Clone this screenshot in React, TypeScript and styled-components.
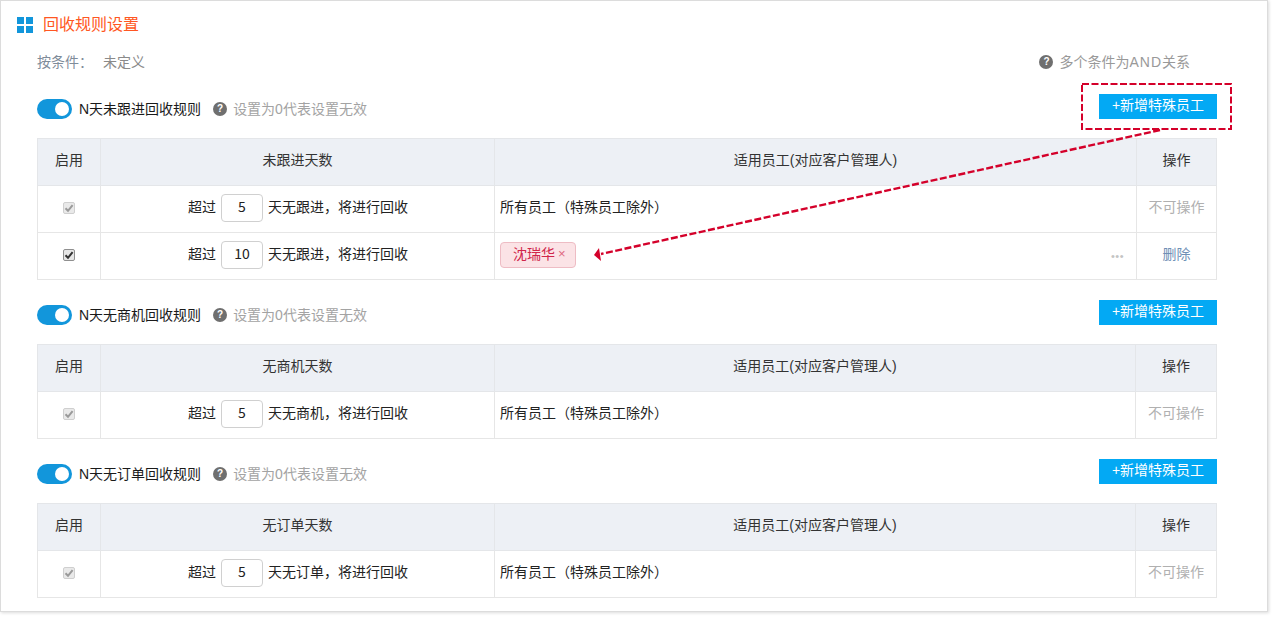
import React from 'react';
import styled, { createGlobalStyle } from 'styled-components';

const GlobalStyle = createGlobalStyle`
  html, body {
    margin: 0;
    padding: 0;
    background: #ffffff;
    font-family: "Liberation Sans", "Noto Sans CJK SC", sans-serif;
    font-size: 14px;
    color: #333333;
  }
`;

const Page = styled.div`
  position: relative;
  width: 1277px;
  height: 620px;
  overflow: hidden;
`;

const Card = styled.div`
  box-sizing: border-box;
  width: 1268px;
  height: 612px;
  background: #ffffff;
  border: 1px solid #dcdcdc;
  box-shadow: 1px 1px 3px rgba(0, 0, 0, 0.14);
  padding: 14px 50px 0 36px;
`;

const TitleRow = styled.div`
  display: flex;
  align-items: center;
  gap: 10px;
  height: 20px;
  margin-left: -20px;
`;

const TitleText = styled.div`
  font-size: 16px;
  line-height: 20px;
  color: #ff5722;
`;

const ConditionRow = styled.div`
  display: flex;
  align-items: center;
  height: 20px;
  margin-top: 17px;
  font-size: 14px;
  line-height: 18px;
  color: #7f8c9a;
`;

const ConditionValue = styled.span`
  margin-left: 10px;
  color: #8a8a8a;
`;

const ConditionNote = styled.div`
  display: flex;
  align-items: center;
  gap: 6px;
  margin-left: auto;
  margin-right: 27px;
  color: #999999;
`;

const WideLatin = styled.span`
  letter-spacing: 1px;
`;

const RuleHeader = styled.div<{ $first?: boolean }>`
  display: flex;
  align-items: flex-end;
  height: 25px;
  margin-top: ${(p) => (p.$first ? '22px' : '20px')};
  margin-bottom: 19px;
`;

const SwitchTrack = styled.div`
  position: relative;
  width: 35px;
  height: 20px;
  border-radius: 10px;
  background: #1296db;
`;

const SwitchKnob = styled.div`
  position: absolute;
  top: 3px;
  right: 3px;
  width: 14px;
  height: 14px;
  border-radius: 50%;
  background: #ffffff;
`;

const RuleName = styled.span`
  margin-left: 7px;
  font-size: 14px;
  line-height: 18px;
  color: #1a1a1a;
`;

const HelpBadge = styled.span<{ $gapLeft?: number }>`
  display: inline-flex;
  align-items: center;
  justify-content: center;
  flex-shrink: 0;
  width: 14px;
  height: 14px;
  margin-left: ${(p) => p.$gapLeft ?? 0}px;
  border-radius: 50%;
  background: #6f6f6f;
  color: #ffffff;
  font-family: "Liberation Sans", sans-serif;
  font-size: 10px;
  font-weight: 700;
  line-height: 14px;
`;

const HelpRow = styled.div`
  display: flex;
  align-items: center;
  height: 20px;
`;

const HelpText = styled.span`
  margin-left: 6px;
  font-size: 14px;
  line-height: 18px;
  color: #a3a3a3;
`;

const AddButton = styled.button`
  margin-left: auto;
  width: 118px;
  height: 25px;
  padding: 0 0 3px;
  border: none;
  background: #03a9f4;
  color: #ffffff;
  font-family: inherit;
  font-size: 14px;
  line-height: 20px;
`;

const RuleTable = styled.table`
  width: 1180px;
  border-collapse: collapse;
  table-layout: fixed;
`;

const HeadCell = styled.th`
  height: 42px;
  padding: 0 0 4px;
  border: 1px solid #e4e6e9;
  background: #edf0f5;
  font-size: 14px;
  line-height: 20px;
  font-weight: 400;
  color: #333333;
  text-align: center;
`;

const BodyCell = styled.td<{ $align?: string; $pad?: number }>`
  position: relative;
  height: 44px;
  padding: 0 ${(p) => p.$pad ?? 0}px 2px;
  border: 1px solid #e6e6e6;
  font-size: 14px;
  line-height: 20px;
  color: #222222;
  text-align: ${(p) => p.$align ?? 'center'};
`;

const Check = styled.span<{ $disabled?: boolean }>`
  display: inline-flex;
  align-items: center;
  justify-content: center;
  box-sizing: border-box;
  width: 12px;
  height: 12px;
  margin-bottom: 2px;
  border: 1px solid ${(p) => (p.$disabled ? '#cfcfcf' : '#8f8f8f')};
  border-radius: 2px;
  background: ${(p) => (p.$disabled ? '#e9e9e9' : '#e6e6e6')};
  color: ${(p) => (p.$disabled ? '#9a9a9a' : '#333333')};
  vertical-align: middle;
`;

const DaysRow = styled.div`
  display: flex;
  align-items: center;
  justify-content: center;
  gap: 5px;
  padding-left: 1px;
`;

const DaysLabel = styled.span`
  margin-bottom: 2px;
`;

const DaysInput = styled.span`
  box-sizing: border-box;
  width: 42px;
  height: 28px;
  border: 1px solid #d0d0d0;
  border-radius: 4px;
  font-family: "Noto Sans CJK SC", sans-serif;
  font-size: 14px;
  line-height: 22px;
  text-align: center;
`;

const PlainEmployees = styled.span`
  display: block;
  margin-bottom: 2px;
`;

const EmployeeTag = styled.span`
  display: inline-flex;
  align-items: center;
  box-sizing: border-box;
  width: 76px;
  height: 26px;
  padding: 0 0 3px 12px;
  border: 1px solid #eebcc4;
  border-radius: 4px;
  background: #fbe3e6;
  color: #d0254a;
  font-size: 14px;
  vertical-align: middle;
`;

const TagClose = styled.span`
  margin-left: 3px;
  font-family: "Liberation Sans", sans-serif;
  font-size: 13px;
  color: #e0687f;
`;

const MoreDots = styled.span`
  position: absolute;
  top: 50%;
  right: 12px;
  margin-top: -8px;
  font-family: "Liberation Sans", sans-serif;
  font-size: 11px;
  letter-spacing: 0.5px;
  line-height: 16px;
  color: #c4c4c4;
`;

const ActionText = styled.span<{ $danger?: boolean }>`
  display: block;
  margin-bottom: 2px;
  font-size: 14px;
  color: ${(p) => (p.$danger ? '#6f8fb5' : '#b0b0b0')};
`;

const ColWidth = styled.col<{ $w: number }>`
  width: ${(p) => p.$w}px;
`;

const Annotation = styled.svg`
  position: absolute;
  top: 0;
  left: 0;
  pointer-events: none;
`;

const GridIcon = () => (
  <svg width="16" height="16" viewBox="0 0 16 16">
    <rect x="0" y="0" width="7" height="7" fill="#1296db" />
    <rect x="9" y="0" width="7" height="7" fill="#1296db" />
    <rect x="0" y="9" width="7" height="7" fill="#1296db" />
    <rect x="9" y="9" width="7" height="7" fill="#1296db" />
  </svg>
);

const CheckMark = () => (
  <svg width="10" height="10" viewBox="0 0 10 10">
    <path d="M1.5 5.2 L4 7.8 L8.6 2.2" fill="none" stroke="currentColor" strokeWidth="2" />
  </svg>
);

type Row = {
  days: string;
  disabled: boolean;
  tag?: string;
};

type Rule = {
  name: string;
  column: string;
  suffix: string;
  lastCol: number;
  rows: Row[];
};

const rules: Rule[] = [
  {
    name: 'N天未跟进回收规则',
    column: '未跟进天数',
    suffix: '天无跟进，将进行回收',
    lastCol: 80,
    rows: [
      { days: '5', disabled: true },
      { days: '10', disabled: false, tag: '沈瑞华' },
    ],
  },
  {
    name: 'N天无商机回收规则',
    column: '无商机天数',
    suffix: '天无商机，将进行回收',
    lastCol: 81,
    rows: [{ days: '5', disabled: true }],
  },
  {
    name: 'N天无订单回收规则',
    column: '无订单天数',
    suffix: '天无订单，将进行回收',
    lastCol: 81,
    rows: [{ days: '5', disabled: true }],
  },
];

const App: React.FC = () => {
  return (
    <>
      <GlobalStyle />
      <Page>
        <Card>
          <TitleRow>
            <GridIcon />
            <TitleText>回收规则设置</TitleText>
          </TitleRow>
          <ConditionRow>
            按条件：
            <ConditionValue>未定义</ConditionValue>
            <ConditionNote>
              <HelpBadge>?</HelpBadge>
              <span>
                多个条件为<WideLatin>AND</WideLatin>关系
              </span>
            </ConditionNote>
          </ConditionRow>

          {rules.map((rule, index) => (
            <React.Fragment key={rule.name}>
              <RuleHeader $first={index === 0}>
                <HelpRow>
                  <SwitchTrack>
                    <SwitchKnob />
                  </SwitchTrack>
                  <RuleName>{rule.name}</RuleName>
                  <HelpBadge $gapLeft={12}>?</HelpBadge>
                  <HelpText>设置为0代表设置无效</HelpText>
                </HelpRow>
                <AddButton>+新增特殊员工</AddButton>
              </RuleHeader>
              <RuleTable>
                <colgroup>
                  <ColWidth $w={63} />
                  <ColWidth $w={394} />
                  <ColWidth $w={1179 - 63 - 394 - rule.lastCol} />
                  <ColWidth $w={rule.lastCol} />
                </colgroup>
                <thead>
                  <tr>
                    <HeadCell>启用</HeadCell>
                    <HeadCell>{rule.column}</HeadCell>
                    <HeadCell>适用员工(对应客户管理人)</HeadCell>
                    <HeadCell>操作</HeadCell>
                  </tr>
                </thead>
                <tbody>
                  {rule.rows.map((row) => (
                    <tr key={row.days}>
                      <BodyCell>
                        <Check $disabled={row.disabled}>
                          <CheckMark />
                        </Check>
                      </BodyCell>
                      <BodyCell>
                        <DaysRow>
                          <DaysLabel>超过</DaysLabel>
                          <DaysInput>{row.days}</DaysInput>
                          <DaysLabel>{rule.suffix}</DaysLabel>
                        </DaysRow>
                      </BodyCell>
                      <BodyCell $align="left" $pad={5}>
                        {row.tag ? (
                          <>
                            <EmployeeTag>
                              {row.tag}
                              <TagClose>×</TagClose>
                            </EmployeeTag>
                            <MoreDots>•••</MoreDots>
                          </>
                        ) : (
                          <PlainEmployees>所有员工（特殊员工除外）</PlainEmployees>
                        )}
                      </BodyCell>
                      <BodyCell>
                        <ActionText $danger={!row.disabled}>
                          {row.disabled ? '不可操作' : '删除'}
                        </ActionText>
                      </BodyCell>
                    </tr>
                  ))}
                </tbody>
              </RuleTable>
            </React.Fragment>
          ))}
        </Card>

        <Annotation width="1277" height="620" viewBox="0 0 1277 620">
          <rect
            x="1082"
            y="84"
            width="149"
            height="45"
            fill="none"
            stroke="#d4002a"
            strokeWidth="2"
            strokeDasharray="7 2.5"
          />
          <path
            d="M1160 130 L601 254"
            fill="none"
            stroke="#d4002a"
            strokeWidth="2.4"
            strokeDasharray="7 2.5"
          />
          <path d="M594 255 L599 248 L601 261 Z" fill="#d4002a" />
        </Annotation>
      </Page>
    </>
  );
};

export default App;
